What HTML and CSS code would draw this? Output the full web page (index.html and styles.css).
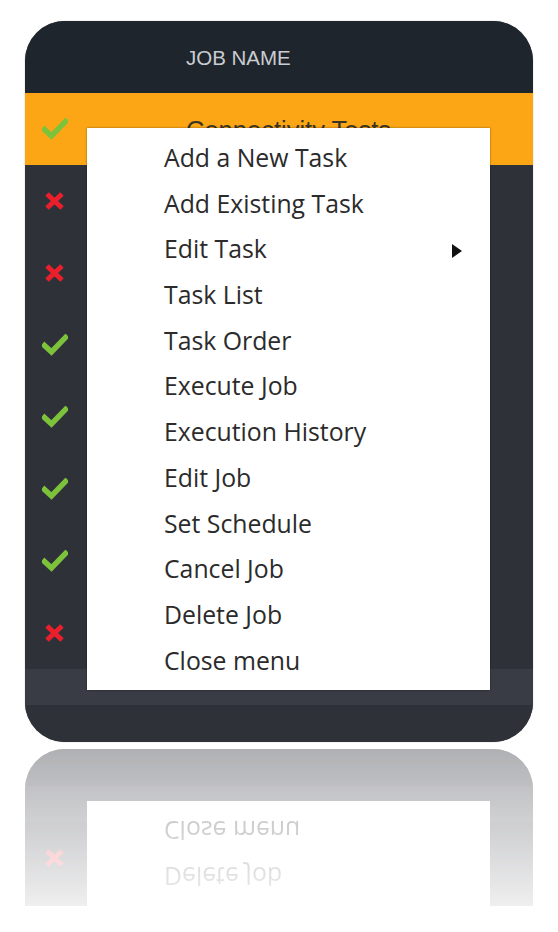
FILE: index.html
```html
<!DOCTYPE html>
<html>
<head>
<meta charset="utf-8">
<link rel="stylesheet" href="styles.css">
</head>
<body>
<div class="stage">
  <div class="card">
    <div class="head"><span class="head-label">JOB NAME</span></div>
    <div class="row row-active">
      <span class="status"><svg class="ico" viewBox="0 0 26 22"><path class="ok" d="M2.5 11.5 L9.5 18 L23.5 3.5"/></svg></span>
      <span class="job">Connectivity Tests</span>
    </div>
    <div class="row"><span class="status"><svg class="ico" viewBox="0 0 26 22"><path class="bad" d="M5 4 L20 18 M20 4 L5 18"/></svg></span></div>
    <div class="row"><span class="status"><svg class="ico" viewBox="0 0 26 22"><path class="bad" d="M5 4 L20 18 M20 4 L5 18"/></svg></span></div>
    <div class="row"><span class="status"><svg class="ico" viewBox="0 0 26 22"><path class="ok" d="M2.5 11.5 L9.5 18 L23.5 3.5"/></svg></span></div>
    <div class="row"><span class="status"><svg class="ico" viewBox="0 0 26 22"><path class="ok" d="M2.5 11.5 L9.5 18 L23.5 3.5"/></svg></span></div>
    <div class="row"><span class="status"><svg class="ico" viewBox="0 0 26 22"><path class="ok" d="M2.5 11.5 L9.5 18 L23.5 3.5"/></svg></span></div>
    <div class="row"><span class="status"><svg class="ico" viewBox="0 0 26 22"><path class="ok" d="M2.5 11.5 L9.5 18 L23.5 3.5"/></svg></span></div>
    <div class="row"><span class="status"><svg class="ico" viewBox="0 0 26 22"><path class="bad" d="M5 4 L20 18 M20 4 L5 18"/></svg></span></div>
    <div class="band"></div>
    <div class="foot"></div>

    <ul class="menu">
      <li class="item">Add a New Task</li>
      <li class="item">Add Existing Task</li>
      <li class="item">Edit Task<span class="caret"></span></li>
      <li class="item">Task List</li>
      <li class="item">Task Order</li>
      <li class="item">Execute Job</li>
      <li class="item">Execution History</li>
      <li class="item">Edit Job</li>
      <li class="item">Set Schedule</li>
      <li class="item">Cancel Job</li>
      <li class="item">Delete Job</li>
      <li class="item">Close menu</li>
    </ul>
  </div>

  <div class="reflection" aria-hidden="true">
    <div class="mirror">
      <div class="m-gap"></div>
      <div class="row"><span class="status"><svg class="ico" viewBox="0 0 26 22"><path class="bad" d="M5 4 L20 18 M20 4 L5 18"/></svg></span></div>
      <div class="band"></div>
      <div class="foot"></div>
      <ul class="m-menu">
        <li class="item">Delete Job</li>
        <li class="item">Close menu</li>
      </ul>
    </div>
  </div>
</div>
</body>
</html>
```

FILE: styles.css
```css
html, body {
  margin: 0;
  padding: 0;
  background: #ffffff;
}

.stage {
  padding: 21px 0 0 25px;
}

.card {
  position: relative;
  width: 508px;
  border-radius: 40px;
  overflow: hidden;
  background: #2f3139;
  box-shadow: 0 0 1px rgba(0, 0, 0, 0.5);
}

.head {
  height: 72px;
  background: #1f252c;
  display: flex;
  align-items: center;
  padding-left: 161px;
}

.head-label {
  font-family: "Liberation Sans", Arial, sans-serif;
  font-size: 20.5px;
  color: #c9cdd2;
  margin-top: 2px;
}

.row {
  height: 72px;
  display: flex;
  align-items: center;
  background: #2f3139;
}

.row-active {
  background: #fca615;
}

.status {
  width: 60px;
  display: flex;
  justify-content: center;
  align-items: center;
}

.ico {
  width: 26px;
  height: 22px;
  display: block;
}

.ok {
  fill: none;
  stroke: #7cc33b;
  stroke-width: 5.5;
  stroke-linecap: square;
  stroke-linejoin: miter;
}

.bad {
  fill: none;
  stroke: #e9202b;
  stroke-width: 5;
  stroke-linecap: butt;
}

.job {
  margin-left: 101px;
  font-family: "Liberation Sans", Arial, sans-serif;
  font-size: 25.5px;
  color: #3a3427;
  margin-top: 3px;
}

.band {
  height: 36px;
  background: #3a3c45;
}

.foot {
  height: 37px;
  background: #2f3139;
}

.menu {
  position: absolute;
  left: 62px;
  top: 107px;
  width: 403px;
  height: 562px;
  margin: 0;
  padding: 7px 0 0 0;
  box-sizing: border-box;
  list-style: none;
  background: #ffffff;
  box-shadow: 0 0 2px rgba(0, 0, 0, 0.45);
}

.item {
  position: relative;
  height: 45.7px;
  line-height: 45.7px;
  padding-left: 77px;
  font-family: "Open Sans", "Noto Sans", sans-serif;
  font-size: 24.8px;
  color: #2b2b2b;
  white-space: nowrap;
}

.caret {
  position: absolute;
  right: 28px;
  top: 18px;
  width: 0;
  height: 0;
  border-top: 7.5px solid transparent;
  border-bottom: 7.5px solid transparent;
  border-left: 10px solid #111111;
}

/* reflection under the card */
.reflection {
  width: 508px;
  height: 157px;
  margin-top: 7px;
  overflow: hidden;
  -webkit-mask-image: linear-gradient(to bottom, rgba(0, 0, 0, 0.38), rgba(0, 0, 0, 0.08));
  mask-image: linear-gradient(to bottom, rgba(0, 0, 0, 0.38), rgba(0, 0, 0, 0.08));
}

.mirror {
  position: relative;
  height: 157px;
  overflow: hidden;
  border-radius: 0 0 40px 40px;
  background: #2f3139;
  transform: scaleY(-1);
}

.m-gap {
  height: 12px;
  background: #2f3139;
}

.m-menu {
  position: absolute;
  left: 62px;
  top: 0;
  width: 403px;
  height: 105px;
  margin: 0;
  padding: 7px 0 0 0;
  box-sizing: border-box;
  list-style: none;
  background: #ffffff;
}
```
